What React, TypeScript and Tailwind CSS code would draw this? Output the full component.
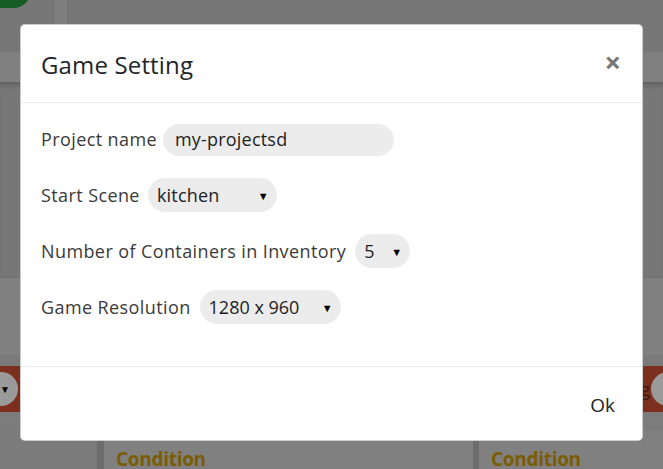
import React from 'react';

const font = { fontFamily: '"Open Sans", "Noto Sans", Arial, sans-serif' };

const Caret = () => (
  <span className="ml-auto text-[11px] leading-none text-black">▼</span>
);

interface SelectBoxProps {
  value: string;
  width: string;
}

const SelectBox: React.FC<SelectBoxProps> = ({ value, width }) => (
  <div
    className={`flex h-[34px] items-center rounded-full bg-[#ececec] pl-[9px] pr-[8px] text-[18px] text-[#222] ${width}`}
  >
    <span>{value}</span>
    <Caret />
  </div>
);

const Background: React.FC = () => (
  <div className="flex h-full w-full flex-col bg-[#777777]">
    <div className="flex h-[52px] shrink-0">
      <div className="-ml-[30px] -mt-[24px] h-[32px] w-[60px] rounded-full bg-[#155d27]" />
      <div className="ml-[25px] h-full w-[12px] bg-[#7f7f7f]" />
    </div>
    <div className="h-[30px] shrink-0 bg-[#808080]" />
    <div className="h-[195px] shrink-0 bg-[#777777] shadow-[inset_0_6px_6px_-4px_rgba(0,0,0,0.25)]" />
    <div className="h-[78px] shrink-0 border-t border-[#6f6f6f] bg-[#808080]" />
    <div className="h-[11px] shrink-0 bg-[#7a7a7a]" />
    <div className="flex h-[46px] shrink-0 items-center justify-between bg-[#7c2f1d]">
      <div className="-ml-[16px] flex h-[34px] w-[34px] items-center justify-end rounded-full bg-[#9a9a9a] pr-[8px] text-[10px] text-black">
        ▼
      </div>
      <div className="flex items-center">
        <span className="text-[18px] text-[#3a1a10]">g</span>
        <div className="-mr-[22px] ml-[1px] h-[34px] w-[34px] rounded-full bg-[#9a9a9a]" />
      </div>
    </div>
    <div className="h-[18px] shrink-0 bg-[#7c7c7c]" />
    <div className="flex flex-1">
      <div className="w-[97px] bg-[#7b7b7b]" />
      <div className="w-[7px] bg-[#6c6c6c]" />
      <div className="w-[369px] bg-[#808080] pl-[12px] pt-[20px] text-[19px] font-bold leading-none tracking-[-0.3px] text-[#7b5c00]">
        Condition
      </div>
      <div className="w-[6px] bg-[#6c6c6c]" />
      <div className="flex-1 bg-[#808080] pl-[12px] pt-[20px] text-[19px] font-bold leading-none tracking-[-0.3px] text-[#7b5c00]">
        Condition
      </div>
    </div>
  </div>
);

export default function App() {
  return (
    <div className="relative h-[469px] w-[663px] overflow-hidden" style={font}>
      <Background />
      <div className="absolute left-[20px] top-[24px] flex h-[417px] w-[623px] flex-col rounded-[5px] border border-black/20 bg-white">
        <div className="flex h-[78px] shrink-0 items-center justify-between border-b border-[#e9ecef] pl-[20px] pr-[21px]">
          <h5 className="pt-[2px] text-[24px] leading-none tracking-[0.15px] text-[#212529]">Game Setting</h5>
          <button type="button" className="-mt-[4px] text-[29px] font-bold leading-none text-[#777]">
            ×
          </button>
        </div>
        <div className="flex flex-1 flex-col gap-[22px] pl-[20px] pt-[20px] text-[18px] tracking-[0.4px] text-[#3a3a3a]">
          <div className="flex h-[33px] items-center">
            <span>Project name</span>
            <div className="ml-[6px] flex h-[32px] w-[231px] items-center rounded-full bg-[#ececec] pl-[12px] tracking-[0.2px] text-[#222]">
              my-projectsd
            </div>
          </div>
          <div className="flex h-[34px] items-center">
            <span>Start Scene</span>
            <div className="ml-[8px] tracking-[0.2px]">
              <SelectBox value="kitchen" width="w-[129px]" />
            </div>
          </div>
          <div className="flex h-[34px] items-center">
            <span>Number of Containers in Inventory</span>
            <div className="ml-[9px] tracking-normal">
              <SelectBox value="5" width="w-[55px]" />
            </div>
          </div>
          <div className="flex h-[34px] items-center">
            <span>Game Resolution</span>
            <div className="ml-[9px] tracking-normal">
              <SelectBox value="1280 x 960" width="w-[141px]" />
            </div>
          </div>
        </div>
        <div className="flex h-[74px] shrink-0 items-center justify-end border-t border-[#e9ecef] pr-[27px] pt-[4px]">
          <button type="button" className="text-[19px] text-[#222]">
            Ok
          </button>
        </div>
      </div>
    </div>
  );
}
